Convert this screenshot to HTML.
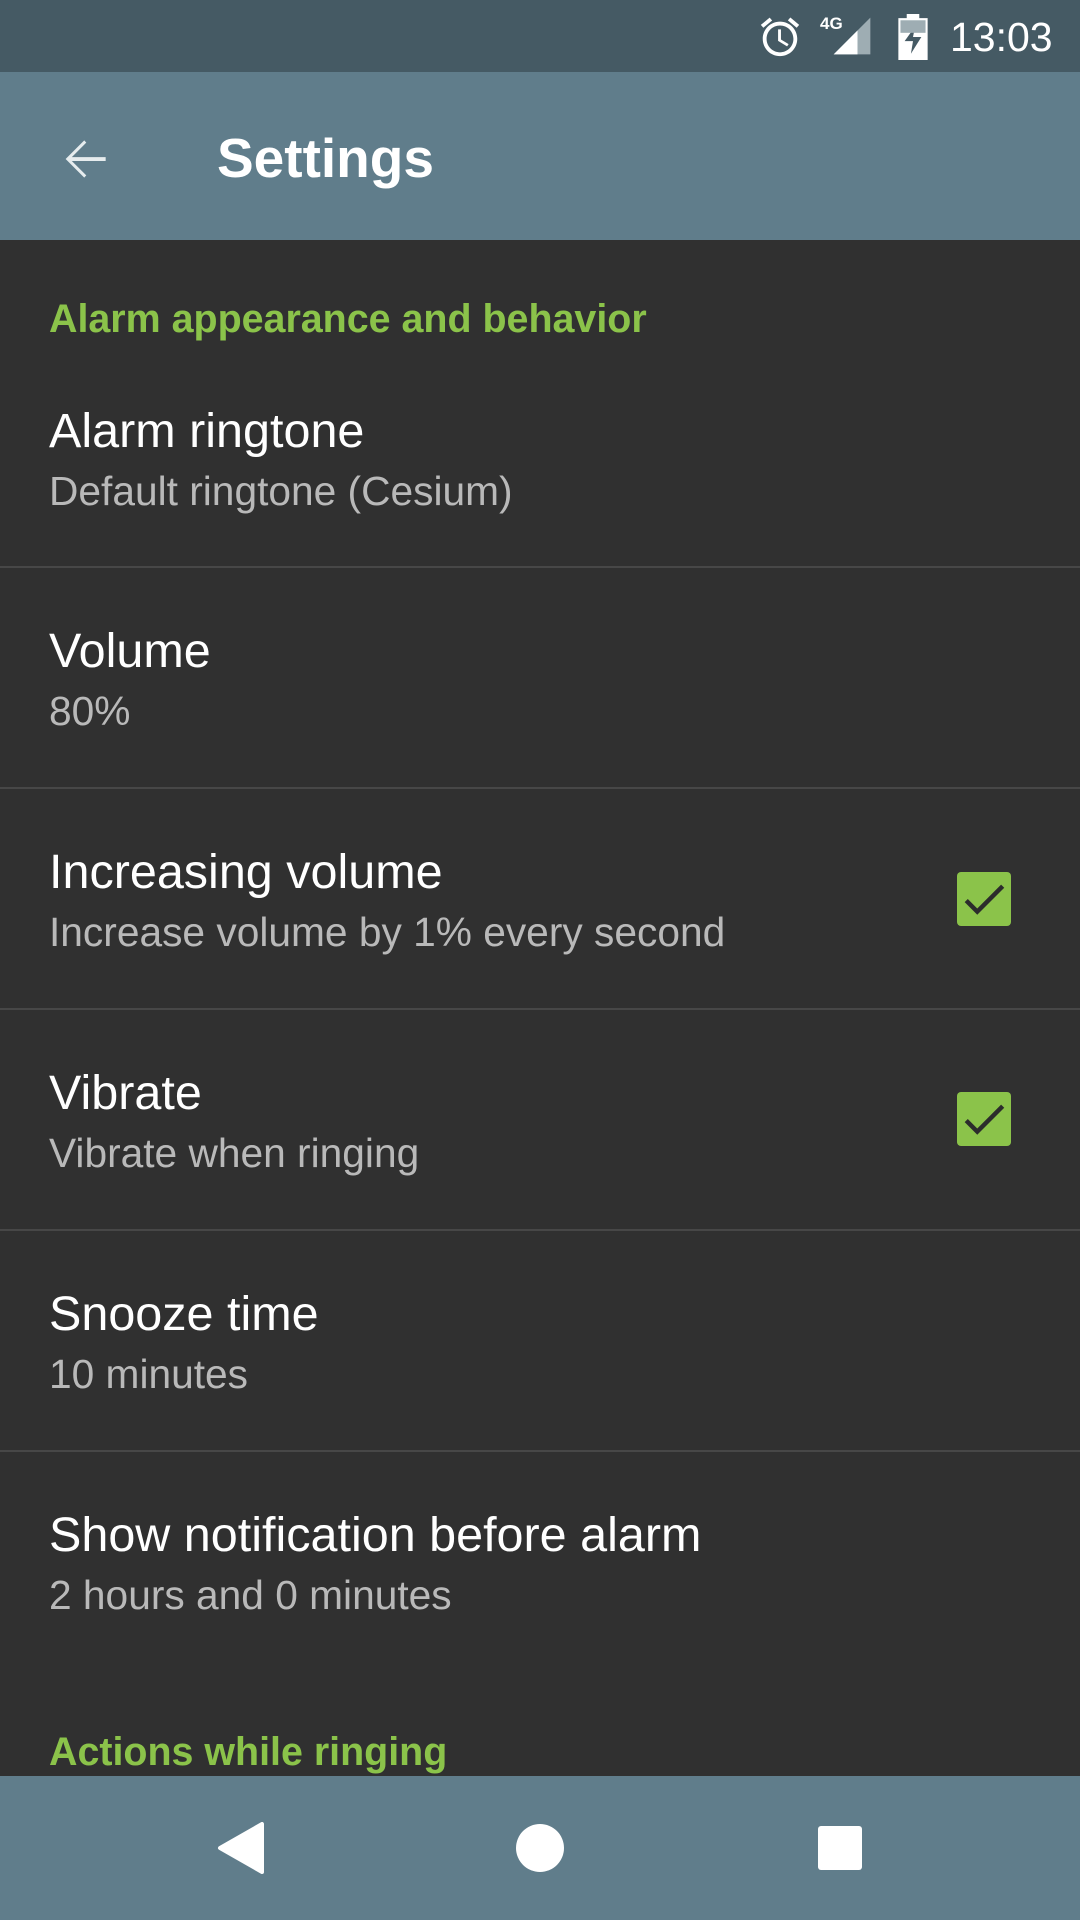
<!DOCTYPE html>
<html><head><meta charset="utf-8"><style>
*{margin:0;padding:0;box-sizing:border-box}
body{width:1080px;height:1920px;background:#303030;font-family:"Liberation Sans",Roboto,sans-serif;position:relative;overflow:hidden}
.a{position:absolute;white-space:nowrap}
.sb{top:0;left:0;width:1080px;height:72px;background:#455a64}
.ab{top:72px;left:0;width:1080px;height:168px;background:#607d8b}
.t{left:49px;font-size:48.5px;color:#fff;line-height:56px}
.s{left:49px;font-size:40.7px;color:#b9b9b9;line-height:50px}
.h{left:49px;font-size:39.4px;color:#8bc34a;font-weight:bold;line-height:50px}
.d{left:0;width:1080px;height:2px;background:#474747}
.cb{left:957px;width:54px;height:54px;background:#8bc34a;border-radius:4px}
.nav{top:1776px;left:0;width:1080px;height:144px;background:#607d8b}
</style></head><body>
<div class="a sb"></div>
<svg class="a" style="left:757px;top:14px" width="46" height="46" viewBox="0 0 24 24"><path fill="#fff" d="M22 5.7l-4.6-3.9-1.3 1.5 4.6 3.9L22 5.7zM7.9 3.4L6.6 1.9 2 5.7l1.3 1.5 4.6-3.8zM12.5 8H11v6l4.7 2.9.8-1.2-4-2.4V8zM12 4c-5 0-9 4-9 9s4 9 9 9 9-4 9-9-4-9-9-9zm0 16c-3.9 0-7-3.1-7-7s3.1-7 7-7 7 3.1 7 7-3.1 7-7 7z"/></svg>
<div class="a" style="left:820px;top:14px;font-size:17px;font-weight:bold;color:#fff">4G</div>
<svg class="a" style="left:830px;top:14px" width="44" height="44" viewBox="0 0 24 24"><path fill="#9eadb3" d="M2 22L22 2v20z"/><path fill="#fff" d="M2 22L15 9v13z"/></svg>
<svg class="a" style="left:898px;top:14px" width="30" height="46" viewBox="0 0 14 22"><path fill="#fff" d="M4 0h6v2h4v20H0V2h4z"/><path fill="#455a64" d="M8 6L3 13h4l-1 6 5-8H7z"/><rect x="1" y="3" width="12" height="6" fill="#9eadb3"/></svg>
<div class="a" style="left:950px;top:12px;font-size:41px;color:#fff;line-height:50px">13:03</div>
<div class="a ab"></div>
<svg class="a" style="left:54px;top:128px" width="62" height="62" viewBox="0 0 24 24"><path fill="#e6ecee" d="M20 11.25H6.9l5.6-5.6L11.7 4.8 4.5 12l7.2 7.2.8-.85-5.6-5.6H20z"/></svg>
<div class="a" style="left:217px;top:126px;font-size:55px;color:#fff;font-weight:bold;line-height:64px">Settings</div>

<div class="a h" style="top:294px">Alarm appearance and behavior</div>
<div class="a t" style="top:403px">Alarm ringtone</div>
<div class="a s" style="top:466px">Default ringtone (Cesium)</div>
<div class="a d" style="top:566px"></div>
<div class="a t" style="top:623px">Volume</div>
<div class="a s" style="top:686px">80%</div>
<div class="a d" style="top:787px"></div>
<div class="a t" style="top:844px">Increasing volume</div>
<div class="a s" style="top:907px">Increase volume by 1% every second</div>
<div class="a cb" style="top:872px"><svg width="54" height="54" viewBox="0 0 24 24"><path fill="#2c2c2c" d="M9 16.2L4.8 12l-1.4 1.4L9 19 21 7l-1.4-1.4z"/></svg></div>
<div class="a d" style="top:1008px"></div>
<div class="a t" style="top:1065px">Vibrate</div>
<div class="a s" style="top:1128px">Vibrate when ringing</div>
<div class="a cb" style="top:1092px"><svg width="54" height="54" viewBox="0 0 24 24"><path fill="#2c2c2c" d="M9 16.2L4.8 12l-1.4 1.4L9 19 21 7l-1.4-1.4z"/></svg></div>
<div class="a d" style="top:1229px"></div>
<div class="a t" style="top:1286px">Snooze time</div>
<div class="a s" style="top:1349px">10 minutes</div>
<div class="a d" style="top:1450px"></div>
<div class="a t" style="top:1507px">Show notification before alarm</div>
<div class="a s" style="top:1570px">2 hours and 0 minutes</div>
<div class="a h" style="top:1727px">Actions while ringing</div>

<div class="a nav"></div>
<svg class="a" style="left:216px;top:1822px" width="50" height="52" viewBox="0 0 50 52"><path fill="#fff" d="M46 2v48L4 26z" stroke="#fff" stroke-width="4" stroke-linejoin="round"/></svg>
<div class="a" style="left:516px;top:1824px;width:48px;height:48px;border-radius:50%;background:#fff"></div>
<div class="a" style="left:818px;top:1826px;width:44px;height:44px;border-radius:3px;background:#fff"></div>
</body></html>
